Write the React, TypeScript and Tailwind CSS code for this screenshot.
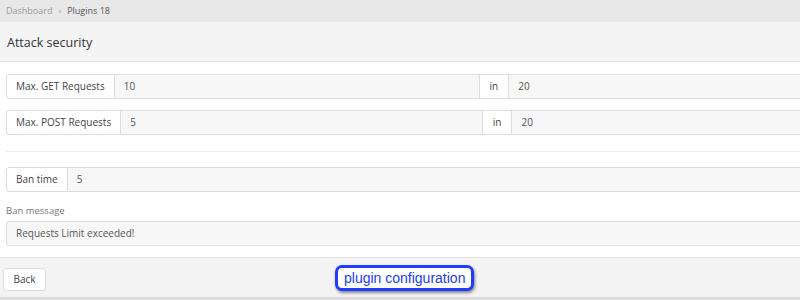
import React from "react";

function Addon({ children, className = "" }: { children: React.ReactNode; className?: string }) {
  return (
    <span
      className={`flex items-center bg-white border border-[#dcdcdc] text-[10px] text-[#444] whitespace-nowrap ${className}`}
    >
      {children}
    </span>
  );
}

function Field({ value, className = "" }: { value: string; className?: string }) {
  return (
    <div
      className={`flex items-center px-[9px] bg-[#f7f7f7] border border-[#dcdcdc] text-[10px] text-[#555] min-w-0 ${className}`}
    >
      {value}
    </div>
  );
}

function RateRow({ label, count, period }: { label: string; count: string; period: string }) {
  return (
    <div className="flex h-[25px] w-[868px]">
      <Addon className="px-[9px] rounded-l-[3px]">{label}</Addon>
      <Field value={count} className="flex-1 border-l-0" />
      <Addon className="border-l-0 px-[10px]">in</Addon>
      <Field value={period} className="flex-1 border-l-0" />
    </div>
  );
}

export default function App() {
  return (
    <div
      className="relative w-[800px] h-[300px] overflow-hidden bg-white"
      style={{ fontFamily: '"Open Sans", sans-serif' }}
    >
      <div className="h-[22px] bg-[#e8e8e8] flex items-center gap-[6px] px-[6px] text-[9px]">
        <span className="text-[#9a9a9a]">Dashboard</span>
        <span className="text-[#9a9a9a] text-[9px]">›</span>
        <span className="text-[#555]">Plugins 18</span>
      </div>

      <div className="h-[40px] bg-[#f4f4f4] border-b border-[#e2e2e2] flex items-center px-[7px] pt-[3px] text-[12.5px] text-[#333]">
        Attack security
      </div>

      <div className="pl-[6px] pt-[12px]">
        <div className="flex flex-col gap-[11px]">
          <RateRow label="Max. GET Requests" count="10" period="20" />
          <RateRow label="Max. POST Requests" count="5" period="20" />
        </div>

        <div className="mt-[16px] border-t border-[#ececec] w-[868px]" />

        <div className="mt-[15px] flex h-[25px] w-[868px]">
          <Addon className="px-[9px] rounded-l-[3px]">Ban time</Addon>
          <Field value="5" className="flex-1 border-l-0" />
        </div>

        <div className="mt-[12px] text-[9.5px] text-[#777] leading-[14px]">Ban message</div>
        <Field
          value="Requests Limit exceeded!"
          className="mt-[3px] h-[25px] w-[868px] rounded-[3px]"
        />
      </div>

      <div className="absolute left-0 right-0 top-[257px] h-[43px] bg-[#f3f3f3] border-t border-[#e4e4e4] border-b-[3px] border-b-[#dcdcdc] flex items-start pt-[10px] px-[3px]">
        <button className="h-[23px] w-[43px] bg-white border border-[#dcdcdc] rounded-[3px] text-[10px] text-[#444]">
          Back
        </button>
      </div>

      <div
        className="absolute left-[335px] top-[265px] h-[26px] px-[6px] flex items-center bg-white border-[3px] border-[#1f3cff] rounded-[7px] text-[14px] text-[#2040f0] shadow-[1px_2px_3px_rgba(0,0,0,0.45)]"
        style={{ fontFamily: '"Liberation Sans", Arial, sans-serif' }}
      >
        plugin configuration
      </div>
    </div>
  );
}
